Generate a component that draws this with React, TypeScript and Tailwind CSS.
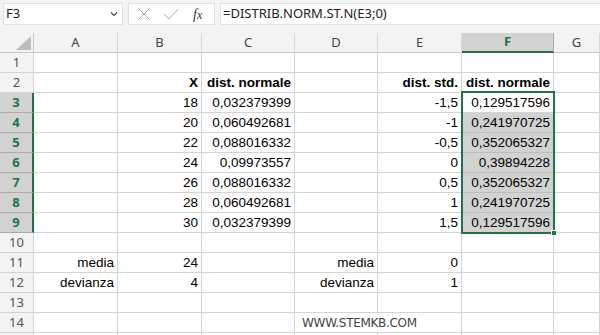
import React from 'react';

type CellDef = { t?: string; b?: boolean; left?: boolean; span?: boolean };

const cols = ['A', 'B', 'C', 'D', 'E', 'F', 'G'];

const xs = [18, 20, 22, 24, 26, 28, 30];
const cVals = ['0,032379399', '0,060492681', '0,088016332', '0,09973557', '0,088016332', '0,060492681', '0,032379399'];
const eVals = ['-1,5', '-1', '-0,5', '0', '0,5', '1', '1,5'];
const fVals = ['0,129517596', '0,241970725', '0,352065327', '0,39894228', '0,352065327', '0,241970725', '0,129517596'];

function rowData(r: number): CellDef[] {
  const empty: CellDef[] = [{}, {}, {}, {}, {}, {}, {}];
  if (r === 2) {
    return [{}, { t: 'X', b: true }, { t: 'dist. normale', b: true }, {}, { t: 'dist. std.', b: true }, { t: 'dist. normale', b: true }, {}];
  }
  if (r >= 3 && r <= 9) {
    const i = r - 3;
    return [{}, { t: String(xs[i]) }, { t: cVals[i] }, {}, { t: eVals[i] }, { t: fVals[i] }, {}];
  }
  if (r === 11) return [{ t: 'media' }, { t: '24' }, {}, { t: 'media' }, { t: '0' }, {}, {}];
  if (r === 12) return [{ t: 'devianza' }, { t: '4' }, {}, { t: 'devianza' }, { t: '1' }, {}, {}];
  if (r === 14) return [{}, {}, {}, { t: 'WWW.STEMKB.COM', left: true, span: true }, {}, {}, {}];
  return empty;
}

export default function App() {
  const rows = Array.from({ length: 15 }, (_, i) => i + 1);

  return (
    <div className="w-[600px] h-[335px] overflow-hidden bg-white font-['Liberation_Sans',sans-serif]">
      {/* Formula bar */}
      <div className="h-[33px] bg-[#f3f3f3] flex items-start pt-[3px] pl-[3px] gap-[5px]">
        <div className="w-[120px] h-[22px] bg-white border border-[#e1e1e1] flex items-center justify-between pl-[2px] pr-[4px]">
          <span className="text-[13px] text-[#222] font-['Noto_Sans',sans-serif]">F3</span>
          <svg width="8" height="6" viewBox="0 0 8 6">
            <path d="M1 1.5 L4 4.5 L7 1.5" fill="none" stroke="#444" strokeWidth="1.1" />
          </svg>
        </div>
        <div className="w-[87px] h-[22px] bg-white border border-[#e1e1e1] flex items-center">
          <svg width="14" height="14" viewBox="0 0 14 14" className="ml-[8px]">
            <path d="M1 1 L13 13 M13 1 L1 13" stroke="#b0b0b0" strokeWidth="1" />
          </svg>
          <svg width="16" height="14" viewBox="0 0 16 14" className="ml-[12px]">
            <path d="M1 7 L6 12 L15 2" fill="none" stroke="#b0b0b0" strokeWidth="1" />
          </svg>
          <span className="ml-[14px] text-[14px] italic text-[#333] font-['Liberation_Serif',serif]">
            f<span className="text-[12px]">x</span>
          </span>
        </div>
        <div className="flex-1 h-[22px] bg-white border border-[#e1e1e1] border-r-0 flex items-center pl-[2px]">
          <span className="text-[13px] text-[#222] font-['Noto_Sans',sans-serif]">=DISTRIB.NORM.ST.N(E3;0)</span>
        </div>
      </div>

      {/* Sheet */}
      <div className="relative grid grid-cols-[34px_84px_84px_93px_83px_84px_92px_1fr] auto-rows-[20px]">
        {/* corner */}
        <div className="bg-[#f3f3f3] border-r border-b border-[#c8c8c8] flex items-end justify-end pr-[2px] pb-[2px]">
          <svg width="15" height="14" viewBox="0 0 15 14">
            <path d="M15 0 L15 14 L0 14 Z" fill="#bdbdbd" />
          </svg>
        </div>
        {cols.map((c) => (
          <div
            key={c}
            className={
              c === 'F'
                ? 'bg-[#d2d2d2] border-r border-[#ababab] border-b-2 border-b-[#217346] flex items-center justify-center text-[13px] font-bold text-[#217346] font-["Noto_Sans",sans-serif]'
                : 'bg-[#f3f3f3] border-r border-b border-[#d8d8d8] border-b-[#c8c8c8] flex items-center justify-center text-[13px] text-[#444] font-["Noto_Sans",sans-serif]'
            }
          >
            {c}
          </div>
        ))}

        {rows.map((r) => {
          const sel = r >= 3 && r <= 9;
          const data = rowData(r);
          return (
            <React.Fragment key={r}>
              <div
                className={
                  sel
                    ? 'bg-[#d2d2d2] border-r-2 border-r-[#217346] border-b border-b-[#ababab] flex items-center justify-center text-[13px] font-bold text-[#217346] font-["Noto_Sans",sans-serif]'
                    : 'bg-[#f3f3f3] border-r border-b border-[#d4d4d4] flex items-center justify-center text-[13px] text-[#555] font-["Noto_Sans",sans-serif]'
                }
              >
                {r < 15 ? r : null}
              </div>
              {data.map((d, ci) => {
                const inSel = ci === 5 && r >= 4 && r <= 9;
                const hideRight = d.span;
                return (
                  <div
                    key={ci}
                    className={[
                      'border-b border-[#d4d4d4] flex items-center text-[13.5px] text-black whitespace-nowrap pt-[1px]',
                      hideRight ? 'border-r-0 overflow-visible z-10' : 'border-r overflow-hidden',
                      d.left ? 'justify-start pl-[7px]' : 'justify-end pr-[3px]',
                      d.b ? 'font-bold' : '',
                      inSel ? 'bg-[#d2d2d2] border-b-[#bdbdbd]' : 'bg-white',
                    ].join(' ')}
                  >
                    {d.left ? (
                      <span className="text-[12px] text-[#444] font-['DejaVu_Sans',sans-serif] tracking-[-0.3px]">{d.t}</span>
                    ) : (
                      d.t
                    )}
                  </div>
                );
              })}
            </React.Fragment>
          );
        })}

        {/* selection F3:F9 */}
        <div className="absolute left-[461px] top-[58px] w-[94px] h-[143px] border-2 border-[#217346] pointer-events-none" />
        <div className="absolute left-[551px] top-[197px] w-[6px] h-[6px] bg-[#217346] border border-white" />
      </div>
    </div>
  );
}
